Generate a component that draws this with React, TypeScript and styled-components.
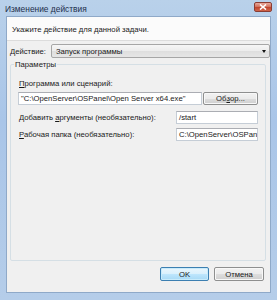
import styled, { createGlobalStyle } from 'styled-components';

const GlobalStyle = createGlobalStyle`
    html, body {
        margin: 0;
        padding: 0;
        background: #ffffff;
    }
    body {
        font-family: 'Liberation Sans', 'Noto Sans', sans-serif;
    }
`;

const Window = styled.div`
    width: 277px;
    height: 300px;
    box-sizing: border-box;
    background: linear-gradient(180deg, #b9d1ea 0%, #a9c5e8 40%, #b5cde9 100%);
    padding: 0 6px 7px 6px;
    display: flex;
    flex-direction: column;
    font-size: 7.7px;
    color: #1a1a1a;
`;

const TitleBar = styled.div`
    height: 16px;
    display: flex;
    align-items: center;
    justify-content: space-between;
`;

const Title = styled.span`
    font-size: 8.4px;
    color: #1e2f4a;
    margin-left: -1px;
    margin-top: 1px;
`;

const CloseButton = styled.div`
    width: 18px;
    height: 10px;
    margin-right: -1px;
    margin-top: -3px;
    border-radius: 2px;
    border: 1px solid #8a3d33;
    background: linear-gradient(180deg, #e9a99c 0%, #d2735f 45%, #c0462f 55%, #d0654b 100%);
    display: flex;
    align-items: center;
    justify-content: center;
    box-sizing: border-box;
`;

const Client = styled.div`
    flex: 1;
    background: #f0f0f0;
    border: 1px solid #8fa9c8;
    display: flex;
    flex-direction: column;
    min-height: 0;
`;

const Header = styled.div`
    height: 22px;
    background: #fbfbfb;
    border-bottom: 1px solid #dcdcdc;
    display: flex;
    align-items: center;
    padding-left: 5px;
    padding-top: 1px;
`;

const ActionRow = styled.div`
    display: flex;
    align-items: center;
    gap: 5px;
    padding: 3px 0 0 3px;
`;

const Label = styled.span`
    white-space: nowrap;
`;

const Combo = styled.div`
    flex: 1;
    height: 14px;
    box-sizing: border-box;
    border: 1px solid #a6a6a6;
    border-radius: 2px;
    background: linear-gradient(180deg, #f6f6f6 0%, #ececec 50%, #dedede 51%, #e6e6e6 100%);
    display: flex;
    align-items: center;
    justify-content: space-between;
    padding: 0 3px 0 4px;
`;

const Arrow = styled.span`
    width: 0;
    height: 0;
    border-left: 2.5px solid transparent;
    border-right: 2.5px solid transparent;
    border-top: 3px solid #111;
`;

const Group = styled.fieldset`
    margin: 2px 4px 0 3px;
    padding: 2px 7px 0 7px;
    height: 201px;
    box-sizing: border-box;
    border: 1px solid #d5dfe5;
    border-radius: 2px;
    display: flex;
    flex-direction: column;
`;

const Legend = styled.legend`
    padding: 0 1px;
    margin-left: -4px;
    font-size: 7.7px;
`;

const FieldLabel = styled.div`
    margin-top: 8px;
    margin-left: 1px;
`;

const BrowseRow = styled.div`
    display: flex;
    align-items: center;
    gap: 1px;
    margin-top: 4px;
`;

const TextBox = styled.div<{ width?: number }>`
    ${(p) => (p.width ? `width: ${p.width}px;` : 'flex: 1;')}
    height: 13px;
    box-sizing: border-box;
    background: #ffffff;
    border: 1px solid #c5cdd6;
    border-top-color: #abadb3;
    padding: 0 2px;
    display: flex;
    align-items: center;
    overflow: hidden;
    white-space: nowrap;
`;

const Button = styled.div<{ primary?: boolean }>`
    width: ${(p) => (p.primary ? 49 : 50)}px;
    height: 14px;
    box-sizing: border-box;
    border: 1px solid ${(p) => (p.primary ? '#3c7fb1' : '#8e8f8f')};
    border-radius: 2px;
    background: ${(p) =>
        p.primary
            ? 'linear-gradient(180deg, #eaf6fd 0%, #d9f0fc 50%, #bee6fd 51%, #a7d9f5 100%)'
            : 'linear-gradient(180deg, #f2f2f2 0%, #ebebeb 50%, #dddddd 51%, #cfcfcf 100%)'};
    box-shadow: inset 0 0 0 1px ${(p) => (p.primary ? '#c8ebfb' : '#f8f8f8')};
    display: flex;
    align-items: center;
    justify-content: center;
`;

const BrowseButton = styled(Button)`
    width: 55px;
    height: 13px;
`;

const ArgRow = styled.div<{ top: number }>`
    display: flex;
    align-items: center;
    justify-content: space-between;
    margin-top: ${(p) => p.top}px;
    padding-left: 1px;
`;

const Footer = styled.div`
    display: flex;
    justify-content: flex-end;
    gap: 5px;
    padding: 6px 6px 0 0;
`;

export default function App() {
    return (
        <>
            <GlobalStyle />
            <Window>
                <TitleBar>
                    <Title>Изменение действия</Title>
                    <CloseButton>
                        <svg width='8' height='6' viewBox='0 0 8 6'>
                            <path d='M1 0.5 L7 5.5 M7 0.5 L1 5.5' stroke='#ffffff' strokeWidth='1.6' />
                        </svg>
                    </CloseButton>
                </TitleBar>
                <Client>
                    <Header>Укажите действие для данной задачи.</Header>
                    <ActionRow>
                        <Label>Действие:</Label>
                        <Combo>
                            <span>Запуск программы</span>
                            <Arrow />
                        </Combo>
                    </ActionRow>
                    <Group>
                        <Legend>Параметры</Legend>
                        <FieldLabel>
                            <u>П</u>рограмма или сценарий:
                        </FieldLabel>
                        <BrowseRow>
                            <TextBox>"C:\OpenServer\OSPanel\Open Server x64.exe"</TextBox>
                            <BrowseButton>
                                Об<u>з</u>ор...
                            </BrowseButton>
                        </BrowseRow>
                        <ArgRow top={6}>
                            <Label>
                                Добавить <u>а</u>ргументы (необязательно):
                            </Label>
                            <TextBox width={82}>/start</TextBox>
                        </ArgRow>
                        <ArgRow top={4}>
                            <Label>
                                <u>Р</u>абочая папка (необязательно):
                            </Label>
                            <TextBox width={82}>C:\OpenServer\OSPanel\</TextBox>
                        </ArgRow>
                    </Group>
                    <Footer>
                        <Button primary>OK</Button>
                        <Button>Отмена</Button>
                    </Footer>
                </Client>
            </Window>
        </>
    );
}
